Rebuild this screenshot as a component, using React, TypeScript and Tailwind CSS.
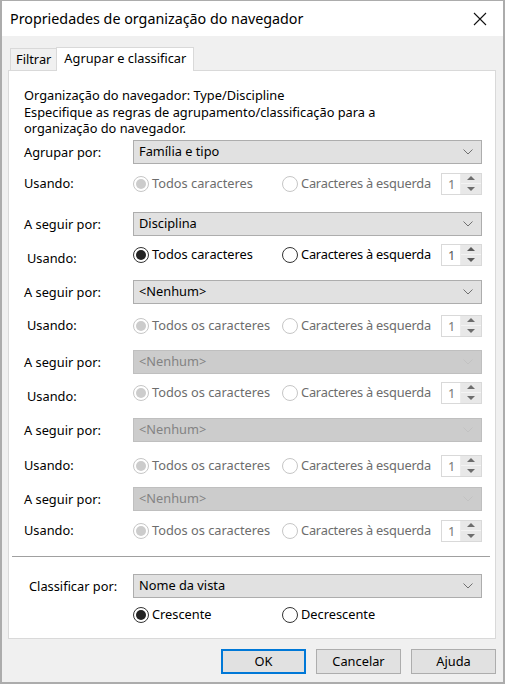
import React from 'react';

const font = { fontFamily: '"Noto Sans", "Segoe UI", sans-serif' };

function Chevron({ disabled }: { disabled?: boolean }) {
  return (
    <svg width="10" height="6" viewBox="0 0 10 6" className="shrink-0">
      <path d="M0.5 0.5 L5 5 L9.5 0.5" fill="none" stroke={disabled ? '#c2c2c2' : '#707070'} strokeWidth="1" />
    </svg>
  );
}

function Dropdown({ value, disabled }: { value: string; disabled?: boolean }) {
  return (
    <div
      className={
        'ml-[124px] mr-[13px] h-[24px] flex items-center justify-between pl-[5px] pr-[8px] border ' +
        (disabled ? 'bg-[#cccccc] border-[#bfbfbf] text-[#838383]' : 'bg-[#e1e1e1] border-[#adadad] text-black')
      }
    >
      <span>{value}</span>
      <Chevron disabled={disabled} />
    </div>
  );
}

function Radio({ checked, disabled }: { checked?: boolean; disabled?: boolean }) {
  return (
    <span
      className={
        'w-[16px] h-[16px] rounded-full border flex items-center justify-center shrink-0 bg-white ' +
        (disabled ? 'border-[#c6c6c6]' : 'border-[#333333]')
      }
    >
      {checked && (
        <span className={'w-[10px] h-[10px] rounded-full ' + (disabled ? 'bg-[#cccccc]' : 'bg-[#222222]')} />
      )}
    </span>
  );
}

function Spinner({ disabled }: { disabled?: boolean }) {
  const arrow = disabled ? '#6d6d6d' : '#5a5a5a';
  return (
    <div className="ml-auto mr-[13px] w-[41px] h-[22px] border border-[#d9d9d9] bg-white flex">
      <span className={'flex-1 pl-[6px] leading-[20px] ' + (disabled ? 'text-[#7a7a7a]' : 'text-[#5a5a5a]')}>1</span>
      <div className="w-[21px] flex flex-col border-l border-[#ececec]">
        <div className="flex-1 bg-[#e8e8e8] border-b border-[#f4f4f4] flex items-center justify-center">
          <svg width="8" height="4" viewBox="0 0 8 4"><path d="M0 4 L4 0 L8 4 Z" fill={arrow} /></svg>
        </div>
        <div className="flex-1 bg-[#e8e8e8] flex items-center justify-center">
          <svg width="8" height="4" viewBox="0 0 8 4"><path d="M0 0 L4 4 L8 0 Z" fill={arrow} /></svg>
        </div>
      </div>
    </div>
  );
}

function UsingRow({
  first,
  disabled,
  labelX,
  labelDrop,
  top,
}: {
  first: string;
  disabled?: boolean;
  labelX: number;
  labelDrop?: boolean;
  top: string;
}) {
  const txt = disabled ? 'text-[#6d6d6d]' : 'text-black';
  return (
    <div className={'h-[22px] flex items-center ' + top}>
      <span
        className={'w-[124px] text-black ' + (labelX === 27 ? 'pl-[18px] ' : 'pl-[15px] ') + (labelDrop ? 'pt-[8px]' : '')}
      >
        Usando:
      </span>
      <div className="w-[149px] flex items-center gap-[3px]">
        <Radio checked disabled={disabled} />
        <span className={txt}>{first}</span>
      </div>
      <div className="flex items-center gap-[3px]">
        <Radio disabled={disabled} />
        <span className={txt + ' tracking-[-0.2px]'}>Caracteres à esquerda</span>
      </div>
      <Spinner disabled={disabled} />
    </div>
  );
}

function DropRow({ label, value, disabled, top }: { label: string; value: string; disabled?: boolean; top: string }) {
  return (
    <div className={'relative ' + top}>
      <span className="absolute left-[15px] top-0 leading-[24px] text-black">{label}</span>
      <Dropdown value={value} disabled={disabled} />
    </div>
  );
}

function Button({ children, primary }: { children: React.ReactNode; primary?: boolean }) {
  return (
    <button
      className={
        'w-[85px] h-[25px] bg-[#e1e1e1] text-black flex items-center justify-center ' +
        (primary ? 'border-2 border-[#0078d7]' : 'border border-[#adadad]')
      }
    >
      {children}
    </button>
  );
}

export default function App() {
  return (
    <div
      style={font}
      className="w-[505px] h-[684px] flex flex-col bg-[#f0f0f0] border-x-2 border-t border-b-2 border-[#acacac] text-[12.8px] text-black overflow-hidden"
    >
      {/* Title bar */}
      <div className="h-[35px] bg-white flex items-center justify-between pl-[8px] pr-[16px] shrink-0">
        <span className="text-[14.3px] text-black">Propriedades de organização do navegador</span>
        <svg width="14" height="14" viewBox="0 0 14 14">
          <path d="M1 1 L13 13 M13 1 L1 13" stroke="#111" strokeWidth="1.1" />
        </svg>
      </div>

      {/* Tabs */}
      <div className="flex items-end pl-[8px] pt-[9px] h-[34px] shrink-0">
        <div className="h-[22px] px-[5px] flex items-center border border-b-0 border-[#d9d9d9] bg-[#f0f0f0] -mr-px">
          Filtrar
        </div>
        <div className="h-[24px] px-[7px] flex items-center border border-b-0 border-[#d9d9d9] bg-white relative z-10 -mb-px pb-[2px]">
          Agrupar e classificar
        </div>
      </div>

      {/* Panel */}
      <div className="ml-[6px] w-[488px] h-[569px] bg-white border border-[#d9d9d9] shrink-0 flex flex-col">
        <div className="pl-[15px] pt-[16px] leading-[16.5px]">
          <div>Organização do navegador: Type/Discipline</div>
          <div>Especifique as regras de agrupamento/classificação para a</div>
          <div>organização do navegador.</div>
        </div>

        <DropRow label="Agrupar por:" value="Família e tipo" top="mt-[3px]" />
        <UsingRow first="Todos caracteres" disabled labelX={24} top="mt-[9px]" />

        <DropRow label="A seguir por:" value="Disciplina" top="mt-[17px]" />
        <UsingRow first="Todos caracteres" labelX={27} labelDrop top="mt-[8px]" />

        <DropRow label="A seguir por:" value="<Nenhum>" top="mt-[14px]" />
        <UsingRow first="Todos os caracteres" disabled labelX={27} top="mt-[11px]" />

        <DropRow label="A seguir por:" value="<Nenhum>" disabled top="mt-[13px]" />
        <UsingRow first="Todos os caracteres" disabled labelX={27} labelDrop top="mt-[8px]" />

        <DropRow label="A seguir por:" value="<Nenhum>" disabled top="mt-[14px]" />
        <UsingRow first="Todos os caracteres" disabled labelX={24} top="mt-[13px]" />

        <DropRow label="A seguir por:" value="<Nenhum>" disabled top="mt-[10px]" />
        <UsingRow first="Todos os caracteres" disabled labelX={24} top="mt-[9px]" />

        <div className="mt-[14px] ml-[3px] mr-[5px] border-t border-[#a0a0a0]" />

        <div className="relative mt-[17px]">
          <span className="absolute left-[20px] top-0 leading-[24px]">Classificar por:</span>
          <Dropdown value="Nome da vista" />
        </div>

        <div className="mt-[8px] ml-[124px] flex items-center h-[18px]">
          <div className="w-[149px] flex items-center gap-[3px]">
            <Radio checked />
            <span>Crescente</span>
          </div>
          <div className="flex items-center gap-[3px]">
            <Radio />
            <span>Decrescente</span>
          </div>
        </div>
      </div>

      {/* Buttons */}
      <div className="flex justify-end gap-[10px] pr-[7px] mt-[10px]">
        <Button primary>OK</Button>
        <Button>Cancelar</Button>
        <Button>Ajuda</Button>
      </div>
    </div>
  );
}
